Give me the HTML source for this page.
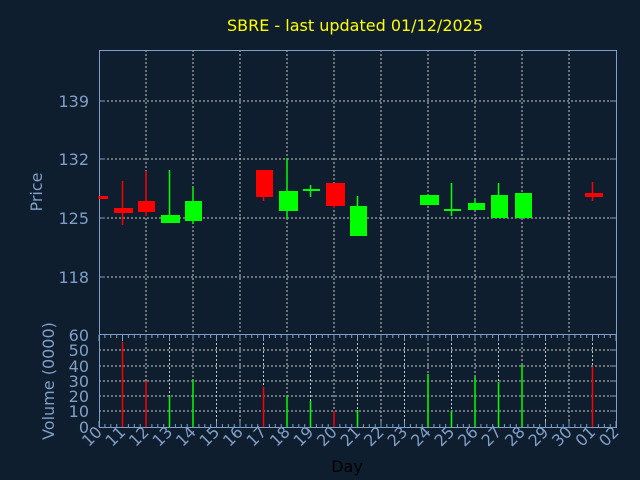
<!DOCTYPE html>
<html><head><meta charset="utf-8"><style>
html,body{margin:0;padding:0;background:#0f1e2e;width:640px;height:480px;overflow:hidden}
svg{display:block}
text{font-family:"DejaVu Sans","Liberation Sans",sans-serif}
</style></head><body>
<svg id="s" width="640" height="480" xmlns="http://www.w3.org/2000/svg">
<rect width="640" height="480" fill="#0f1e2e"/>
<text x="355" y="31" fill="#ffff00" font-size="16" text-anchor="middle">SBRE - last updated 01/12/2025</text>
<g id="g"></g>
</svg>
<script>
var g=document.getElementById('g'),h='';
var X=function(i){return 99+i*23.5};
var ax='#7f9fc8',gr='#c8c8c8';
// price grid
[101,159,218,277].forEach(function(y){h+='<line x1="99" x2="616" y1="'+y+'" y2="'+y+'" stroke="'+gr+'" stroke-dasharray="2,2"/>'});
for(var i=2;i<22;i+=2)h+='<line x1="'+X(i)+'" x2="'+X(i)+'" y1="50" y2="334" stroke="'+gr+'" stroke-dasharray="2,2"/>';
// volume grid
[350,366,381,396,411].forEach(function(y){h+='<line x1="99" x2="616" y1="'+y+'" y2="'+y+'" stroke="'+gr+'" stroke-dasharray="2,2"/>'});
for(var i=1;i<22;i++)h+='<line x1="'+X(i)+'" x2="'+X(i)+'" y1="335" y2="427" stroke="'+gr+'" stroke-dasharray="2,2"/>';
// frames
h+='<rect x="99.5" y="50.5" width="517" height="284" fill="none" stroke="'+ax+'"/>';
h+='<rect x="99.5" y="334.5" width="517" height="93" fill="none" stroke="'+ax+'"/>';
// ticks
for(var i=0;i<=22;i++){var x=X(i);h+='<line x1="'+x+'" x2="'+x+'" y1="427" y2="421" stroke="'+ax+'"/><line x1="'+x+'" x2="'+x+'" y1="335" y2="341" stroke="'+ax+'"/>';
 for(var k=1;k<4;k++){var xx=x+k*5.9;if(xx<616)h+='<line x1="'+xx+'" x2="'+xx+'" y1="427" y2="424" stroke="'+ax+'"/><line x1="'+xx+'" x2="'+xx+'" y1="335" y2="338" stroke="'+ax+'"/>';}}
[101,159,218,277].forEach(function(y){h+='<line x1="99" x2="105" y1="'+y+'" y2="'+y+'" stroke="'+ax+'"/><line x1="610" x2="616" y1="'+y+'" y2="'+y+'" stroke="'+ax+'"/>'});
[350,366,381,396,411].forEach(function(y){h+='<line x1="610" x2="616" y1="'+y+'" y2="'+y+'" stroke="'+ax+'"/>'});
// price labels
[[101,'139'],[159,'132'],[218,'125'],[277,'118']].forEach(function(a){h+='<text x="89" y="'+(a[0]+6)+'" fill="'+ax+'" font-size="16" text-anchor="end">'+a[1]+'</text>'});
[[427,'0'],[411,'10'],[396,'20'],[381,'30'],[366,'40'],[350,'50'],[335,'60']].forEach(function(a){h+='<text x="89" y="'+(a[0]+6)+'" fill="'+ax+'" font-size="16" text-anchor="end">'+a[1]+'</text>'});
h+='<text transform="translate(42,192) rotate(-90)" fill="'+ax+'" font-size="16" text-anchor="middle">Price</text>';
h+='<text transform="translate(54,381) rotate(-90)" fill="'+ax+'" font-size="16" text-anchor="middle">Volume (0000)</text>';
h+='<text x="347" y="472" fill="#000" font-size="16" text-anchor="middle">Day</text>';
var days=['10','11','12','13','14','15','16','17','18','19','20','21','22','23','24','25','26','27','28','29','30','01','02'];
days.forEach(function(d,i){var x=X(i)+4;h+='<text transform="translate('+x+',433) rotate(-45)" fill="'+ax+'" font-size="16" text-anchor="end">'+d+'</text>'});
// candles [day, x1,x2, top,bot, wtop,wbot, color]
var R='#ff0000',G='#00ff00';
var c=[[0,99,108,196,199,196,199,R],[1,114,133,208,213,181,225,R],[2,138,155,201,212,171,216,R],[3,161,180,215,223,170,223,G],[4,185,202,201,221,187,224,G],
[7,256,273,170,197,170,201,R],[8,279,298,191,211,158,219,G],[9,303,320,189,191,185,197,G],[10,326,345,183,206,183,208,R],[11,350,367,206,236,196,236,G],
[14,420,439,195,205,195,205,G],[15,444,461,209,211,183,216,G],[16,468,485,203,210,199,210,G],[17,491,508,195,218,183,218,G],[18,515,532,193,218,193,218,G],[21,585,603,193,197,182,201,R]];
c.forEach(function(a){var x=X(a[0]);h+='<line x1="'+x+'" x2="'+x+'" y1="'+a[5]+'" y2="'+a[6]+'" stroke="'+a[7]+'" stroke-width="1.5"/><rect x="'+a[1]+'" y="'+a[3]+'" width="'+(a[2]-a[1])+'" height="'+Math.max(2,a[4]-a[3])+'" fill="'+a[7]+'"/>'});
// volume
var v=[[1,342,R],[2,381,R],[3,396,G],[4,380,G],[7,387,R],[8,396,G],[9,401,G],[10,411,R],[11,410,G],[14,374,G],[15,411,G],[16,377,G],[17,382,G],[18,365,G],[21,367,R]];
v.forEach(function(a){var x=X(a[0]);h+='<line x1="'+x+'" x2="'+x+'" y1="'+a[1]+'" y2="427" stroke="'+a[2]+'" stroke-width="1.5"/>'});
g.innerHTML=h;
</script>
</body></html>
